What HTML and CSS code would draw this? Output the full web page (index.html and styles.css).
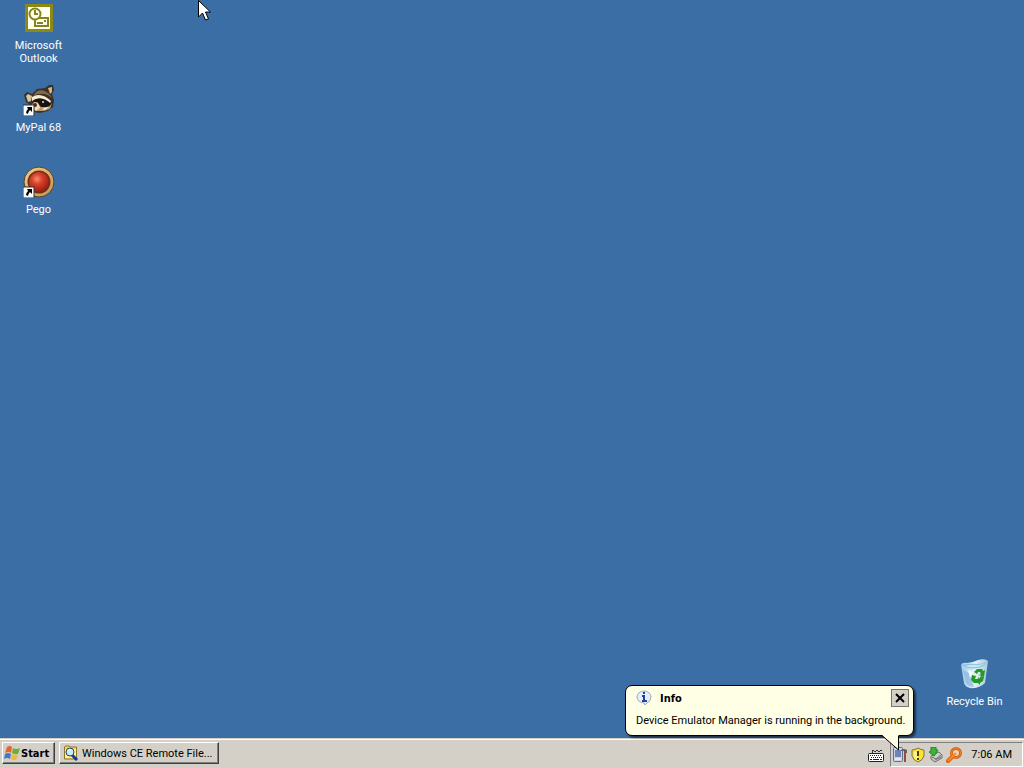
FILE: index.html
```html
<!DOCTYPE html>
<html lang="en">
<head>
<meta charset="utf-8">
<title>Desktop</title>
<link rel="stylesheet" href="styles.css">
</head>
<body>
<main class="desktop">
  <div class="icon-column">
    <a class="shortcut" href="#outlook">
      <svg class="icon" viewBox="0 0 32 32" aria-hidden="true">
        <rect x="2" y="2" width="28" height="28" fill="#8b8a16"/>
        <rect x="5" y="5" width="22" height="22" fill="#fffff0"/>
        <g fill="none" stroke="#85831a" stroke-width="2">
          <rect x="12" y="16" width="13" height="8" fill="#fffff0"/>
          <circle cx="12" cy="12" r="5.500" fill="#fffff0"/>
          <path d="M12 8v4h3M21 19h2M14 21h6"/>
        </g>
      </svg>
      <span class="label">Microsoft Outlook</span>
    </a>
    <a class="shortcut" href="#mypal">
      <svg class="icon" viewBox="0 0 32 32" aria-hidden="true">
        <path d="M1 11L4 8L9 10L14 5L22 4L26 1L30 1L31 6L29 10L31 16L30 23L25 27L17 29L11 28L7 21L3 18Z" fill="#3b3025"/>
        <path d="M3 12l2-2 4 2-1 5-3 1z" fill="#d9c7a2"/>
        <path d="M25 4l4-1v5l-2 2z" fill="#d8b48b"/>
        <path d="M13 8C17 5 23 6 28 12L29 14C25 10 18 8 10 12Z" fill="#80694d"/>
        <path d="M9 13C15 9 22 11 28 17L27 19C20 14 15 13 9 17Z" fill="#f7ecd2"/>
        <path d="M10 17C15 13 22 14 28 20L24 25L17 24Z" fill="#171514"/>
        <path d="M9 20l5-2 4 5 8 0 3-4-2 6-6 2-8 0-5-3z" fill="#bd9871"/>
        <path d="M11 18l4 1 2 5-4 3-4-3z" fill="#f1d9b7"/>
        <circle cx="12" cy="21" r="2" fill="#4b2820"/><circle cx="20" cy="18" r="1" fill="#ddd"/>
        <path d="M19 25l8-3-5 4z" fill="#fff0d5"/>
        <rect x="0" y="21" width="11" height="11" fill="#fff" stroke="#333"/>
        <path d="M4 23h5v5L7 26Q5 28 5 30L3 29Q3 27 5 25Z"/>
      </svg>
      <span class="label">MyPal 68</span>
    </a>
    <a class="shortcut" href="#pego">
      <svg class="icon" viewBox="0 0 32 32" aria-hidden="true">
        <defs>
          <radialGradient id="gem" cx=".4" cy=".35" r=".65"><stop offset="0" stop-color="#f58b6e"/><stop offset=".4" stop-color="#d8422c"/><stop offset="1" stop-color="#9c1e12"/></radialGradient>
          <linearGradient id="ring" x2="1" y2="1"><stop offset="0" stop-color="#f3d08a"/><stop offset="1" stop-color="#c4924f"/></linearGradient>
        </defs>
        <circle cx="16" cy="16" r="15" fill="url(#ring)" stroke="#5b4224"/>
        <circle cx="16" cy="16" r="11.500" fill="#6d3019"/>
        <circle cx="16" cy="16" r="10" fill="url(#gem)"/>
        <rect x="0" y="21" width="11" height="11" fill="#fff" stroke="#333"/>
        <path d="M4 23h5v5L7 26Q5 28 5 30L3 29Q3 27 5 25Z"/>
      </svg>
      <span class="label">Pego</span>
    </a>
  </div>
  <a class="shortcut shortcut-bin" href="#recycle-bin">
    <svg class="icon" viewBox="0 0 32 32" aria-hidden="true">
      <defs><linearGradient id="bin" x2="1"><stop offset="0" stop-color="#9cc8ea"/><stop offset=".5" stop-color="#e4f3f8"/><stop offset="1" stop-color="#a7cad9"/></linearGradient></defs>
      <path d="M2 7Q3 4 8 5Q13 5 19 2Q26 0 29 3L26 25Q20 31 11 30Q6 29 5 25Z" fill="url(#bin)"/>
      <path d="M3 7Q12 5 18 6Q24 6 28 3Q25 10 18 10Q9 12 3 7Z" fill="#8fc2dc"/>
      <path d="M6 8Q13 6 19 7Q23 7 26 5Q22 9 17 9Q11 10 6 8Z" fill="#c5e8f0"/>
      <path d="M4 12l3 13q3 4 8 4l-5-14z" fill="#80afe0" opacity=".6"/>
      <path d="M9 12l2 8 3-6z" fill="#fff" opacity=".8"/>
      <g fill="#269826"><path d="M15 14l3-3h5l1 2 2-1-1 7-5-2 2-1-1-2h-2l-1 2z"/><path d="M13 17l4 1-1 3h4v4h-5l-3-3z"/><path d="M20 21l2-3 3 1-1 4-3 2v2l-4-4 3-4z"/></g>
    </svg>
    <span class="label">Recycle Bin</span>
  </a>
</main>

<footer class="taskbar">
  <button class="task-button start" type="button">
    <svg class="small-icon" viewBox="0 0 16 16" aria-hidden="true">
      <path d="M3 2Q6 0 8 2L7 8Q5 6 1 8Z" fill="#e5662d"/><path d="M9 3Q12 5 16 3L14 9Q11 10 8 8Z" fill="#6fae35"/>
      <path d="M1 9Q4 7 7 9L6 14Q3 12 0 14Z" fill="#4279cf"/><path d="M8 9Q11 11 14 10L12 15Q10 16 7 14Z" fill="#f0bb31"/>
    </svg>
    Start
  </button>
  <button class="task-button window" type="button">
    <svg class="small-icon" viewBox="0 0 16 16" aria-hidden="true">
      <path d="M1.500 2l1-1h4l1 1h6v12h-12z" fill="#f5d65b" stroke="#8f7625"/><path d="M2 4h11v9H2z" fill="#fff2a3"/>
      <path d="M9 10l5 5" stroke="#173899" stroke-width="3"/><circle cx="7" cy="7" r="4" fill="#c5edf7" stroke="#27405d"/><path d="M5 6q1-2 3-1" fill="none" stroke="#fff"/>
    </svg>
    <span>Windows CE Remote File...</span>
  </button>
  <div class="notification">
    <svg class="small-icon keyboard" viewBox="0 0 16 16" aria-hidden="true">
      <path d="M4.500 5V3M4 2.500h2M6 3.500h2M8 2.500h2M10 3.500h2M12 2.500h2" fill="none" stroke="#333"/><rect x=".5" y="5.500" width="15" height="8" rx="1" fill="#fff" stroke="#222"/>
      <path d="M2 7.500h12M3 9.500h11" stroke="#222" stroke-dasharray="1 1"/><path d="M2 11.500h2M5 11.500h6M12 11.500h2" stroke="#222"/>
    </svg>
    <div class="tray">
      <svg class="small-icon" viewBox="0 0 16 16" aria-hidden="true">
        <rect x="1.500" y=".5" width="9" height="14" rx="1" fill="#c9d2e8" stroke="#62708b"/><rect x="3" y="3" width="6" height="7" fill="#6f84b5"/><path d="M3 12h6" stroke="#fff"/>
        <path d="M9 3q3-2 6 0v3h-2V4H9z" fill="#65625e"/><path d="M13 4v11" stroke="#8f5040" stroke-width="2"/>
      </svg>
      <svg class="small-icon" viewBox="0 0 16 16" aria-hidden="true">
        <path d="M8 1Q11 3 14 3V9Q13 13 8 15Q3 13 2 9V3Q5 3 8 1Z" fill="#ffe32b" stroke="#777158"/><path d="M4 5q3 0 4-2v11q-4-2-4-5z" fill="#fff383"/><path d="M8 4v5M8 11v2" stroke="#463d0d" stroke-width="2"/>
      </svg>
      <svg class="small-icon" viewBox="0 0 16 16" aria-hidden="true">
        <path d="M3 9l8-4 3 3v3l-7 4-4-3z" fill="#ccc" stroke="#687069"/><path d="M4 10l4 2 5-4M7 13l6-3" fill="none" stroke="#66706b"/><path d="M3 0h5v3h2L6 9 1 5l2-1z" fill="#35b738" stroke="#258027"/>
      </svg>
      <svg class="small-icon" viewBox="0 0 16 16" aria-hidden="true">
        <path d="M7 9l-5 5" stroke="#d96312" stroke-width="4" stroke-linecap="round"/><circle cx="10" cy="6" r="4.500" fill="#f6d3b6" stroke="#d06316" stroke-width="3"/><circle cx="10" cy="6" r="4.500" fill="none" stroke="#f5882c"/><path d="M10 6l-8 8" stroke="#f5882c" stroke-width="2"/>
      </svg>
      <time class="clock" datetime="07:06">7:06 AM</time>
    </div>
  </div>
</footer>

<section class="balloon" role="status" aria-labelledby="balloon-title">
  <header class="balloon-head">
    <svg class="small-icon" viewBox="0 0 16 16" aria-hidden="true">
      <path d="M8 1A7 6 0 0 1 15 7Q15 11 11 13L9 15L8 13A7 6 0 0 1 8 1Z" fill="#e4eefc" stroke="#9daabd"/>
      <path d="M8 2v2M6 6h2v5M6 11h5" fill="none" stroke="#24409a" stroke-width="2"/>
    </svg>
    <strong class="balloon-title" id="balloon-title">Info</strong>
    <button class="close" type="button" aria-label="Close">
      <svg class="close-mark" viewBox="0 0 10 10" aria-hidden="true"><path d="M1 1l8 8M9 1L1 9" stroke="#000" stroke-width="2"/></svg>
    </button>
  </header>
  <p class="balloon-text">Device Emulator Manager is running in the background.</p>
  <svg class="tail" viewBox="0 0 18 16" aria-hidden="true"><path d="M0 0H17V15L1 1" fill="#ffffe5"/><path d="M0 .5L16.500 15V.5" fill="none" stroke="#000"/><path d="M1 0H16" stroke="#ffffe5" stroke-width="2"/></svg>
</section>

<svg class="cursor" viewBox="0 0 13 21" aria-hidden="true"><path d="M.5 .5V17L4.500 13L7.500 20L10.500 19L7.500 12H12.500Z" fill="#fff" stroke="#000"/></svg>
</body>
</html>
```
FILE: styles.css
```css
* {
  box-sizing: border-box;
}

body {
  margin: 0;
  min-height: 100vh;
  display: flex;
  flex-direction: column;
  position: relative;
  overflow: hidden;
  background: #3b6ea5;
  color: #000;
  font: 11px/13px Roboto, "DejaVu Sans", sans-serif;
}

button {
  font: inherit;
  color: inherit;
  padding: 0;
}

svg {
  display: block;
  flex: none;
}

.desktop {
  flex: 1;
  display: flex;
  justify-content: space-between;
  padding: 2px 11px 0 0;
}

.icon-column {
  display: flex;
  flex-direction: column;
  gap: 2px;
}

.shortcut {
  width: 77px;
  height: 80px;
  display: flex;
  flex-direction: column;
  align-items: center;
  gap: 5px;
  color: #fff;
  text-align: center;
  text-decoration: none;
}

.shortcut-bin {
  align-self: flex-end;
}

.icon {
  width: 32px;
  height: 32px;
}

.label {
  max-width: 64px;
}

.small-icon {
  width: 16px;
  height: 16px;
}

.taskbar {
  display: flex;
  align-items: flex-start;
  gap: 4px;
  height: 30px;
  padding: 3px 1px 0 2px;
  background: #d4d0c8;
  border-top: 1px solid #d4d0c8;
  box-shadow: inset 0 1px #fff;
}

.task-button {
  display: flex;
  align-items: center;
  gap: 3px;
  height: 22px;
  padding: 0 3px;
  background: #d4d0c8;
  border: 1px solid;
  border-color: #fff #404040 #404040 #fff;
  box-shadow: inset -1px -1px #808080;
}

.start {
  width: 53px;
  padding: 0 1px;
  gap: 1px;
  font: bold 11px/13px "DejaVu Sans Condensed", "DejaVu Sans", sans-serif;
}

.window {
  width: 160px;
}

.notification {
  display: flex;
  align-items: center;
  gap: 6px;
  margin-left: auto;
}

.keyboard {
  margin-top: 2px;
}

.tray {
  display: flex;
  align-items: center;
  gap: 2px;
  height: 25px;
  padding: 0 10px 0 1px;
  border: 1px solid;
  border-color: #808080 #fff #fff #808080;
}

.clock {
  padding-left: 7px;
}

.balloon {
  position: absolute;
  right: 110px;
  bottom: 32px;
  width: 289px;
  padding: 3px 4px 8px 10px;
  background: #ffffe5;
  border: 1px solid #000;
  border-radius: 7px;
  box-shadow: 2px 2px 2px #0008;
}

.balloon-head {
  display: flex;
  align-items: center;
  gap: 8px;
}

.balloon-title {
  font: bold 11px/13px "DejaVu Sans Condensed", "DejaVu Sans", sans-serif;
}

.balloon-text {
  margin: 7px 0 0;
  white-space: nowrap;
}

.close {
  display: grid;
  place-items: center;
  width: 18px;
  height: 18px;
  margin-left: auto;
  background: #d4d0c8;
  border: 1px solid #77766c;
}

.close-mark {
  width: 10px;
  height: 10px;
}

.tail {
  position: absolute;
  top: 100%;
  right: 13px;
  width: 18px;
  height: 16px;
}

.cursor {
  position: absolute;
  left: 198px;
  top: 0;
  width: 13px;
  height: 21px;
}
```
